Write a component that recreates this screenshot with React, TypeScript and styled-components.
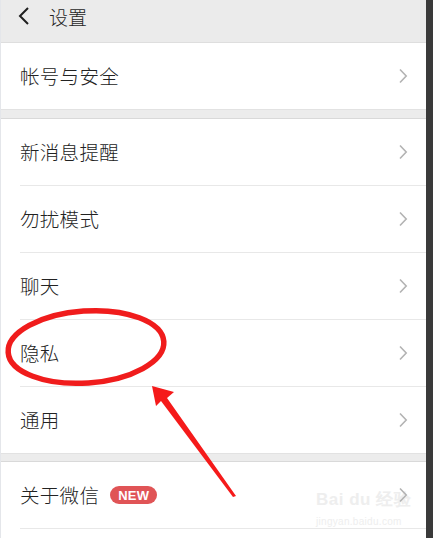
import React from "react";
import styled, { createGlobalStyle } from "styled-components";

const Global = createGlobalStyle`
  html, body { margin: 0; padding: 0; background: #ffffff; }
  body { font-family: "Noto Sans CJK SC", "Noto Sans", sans-serif; }
`;

const Frame = styled.div`
  position: relative;
  width: 433px;
  height: 538px;
  overflow: hidden;
  display: flex;
  background: #ffffff;
`;

const Main = styled.div`
  flex: 1;
  display: flex;
  flex-direction: column;
  border-left: 1px solid #e4e6ea;
`;

const Edge = styled.div`
  width: 7px;
  background: #3a3a3a;
`;

const Header = styled.div`
  height: 43px;
  flex-shrink: 0;
  box-sizing: border-box;
  background: #ebebeb;
  border-bottom: 1px solid #dedede;
  display: flex;
  align-items: flex-start;
  padding: 7px 0 0 17px;
  gap: 19px;
`;

const Title = styled.span`
  font-size: 19px;
  font-weight: 300;
  color: #1f1f1f;
  line-height: 19px;
`;

const Group = styled.div`
  display: flex;
  flex-direction: column;
  background: #ffffff;
`;

const Gap = styled.div<{ $h: number }>`
  height: ${(p) => p.$h}px;
  flex-shrink: 0;
  box-sizing: border-box;
  background: #ececec;
  border-top: 1px solid #e2e2e2;
  border-bottom: 1px solid #d9d9d9;
`;

const Row = styled.div`
  height: 66px;
  flex-shrink: 0;
  display: flex;
  align-items: center;
  padding: 0 18px 0 19px;
`;

const Divider = styled.div`
  height: 1px;
  margin-left: 19px;
  background: #e8e8e8;
`;

const Label = styled.span`
  font-size: 19.5px;
  font-weight: 300;
  color: #222222;
  letter-spacing: 0.3px;
  line-height: 1;
`;

const Badge = styled.span`
  margin-left: 11px;
  height: 18px;
  padding: 0 8px;
  border-radius: 9px;
  background: #e05456;
  color: #ffffff;
  font-family: "Liberation Sans", Arial, sans-serif;
  font-weight: 700;
  font-size: 13px;
  display: inline-flex;
  align-items: center;
  letter-spacing: 0.2px;
`;

const Spacer = styled.div`
  flex: 1;
`;

const ChevronSvg = styled.svg`
  position: relative;
  z-index: 1;
`;

const Overlay = styled.svg`
  position: absolute;
  left: 0;
  top: 0;
  z-index: 2;
  pointer-events: none;
`;

const Watermark = styled.div`
  position: absolute;
  left: 316px;
  top: 491px;
  display: flex;
  flex-direction: column;
  align-items: flex-start;
  color: #eeeeee;
  font-family: "Liberation Sans", Arial, sans-serif;
  pointer-events: none;
`;

const WmTop = styled.span`
  font-size: 17px;
  font-weight: 700;
  letter-spacing: 0.5px;
  line-height: 1;
`;

const WmBottom = styled.span`
  font-size: 10px;
  margin-top: 8px;
  letter-spacing: 0.3px;
`;

const Chevron = () => (
  <ChevronSvg width="10" height="16" viewBox="0 0 10 16">
    <path d="M2 1.5 L8.2 8 L2 14.5" fill="none" stroke="#b3b3b3" strokeWidth="1.6" />
  </ChevronSvg>
);

const Back = () => (
  <svg width="12" height="18" viewBox="0 0 12 18">
    <path d="M10 1 L2 9 L10 17" fill="none" stroke="#1f1f1f" strokeWidth="2" />
  </svg>
);

const items = ["新消息提醒", "勿扰模式", "聊天", "隐私", "通用"];

export default function App() {
  return (
    <>
      <Global />
      <Frame>
        <Main>
          <Header>
            <Back />
            <Title>设置</Title>
          </Header>
          <Group>
            <Row>
              <Label>帐号与安全</Label>
              <Spacer />
              <Chevron />
            </Row>
          </Group>
          <Gap $h={10} />
          <Group>
            {items.map((t, i) => (
              <React.Fragment key={t}>
                {i > 0 && <Divider />}
                <Row>
                  <Label>{t}</Label>
                  <Spacer />
                  <Chevron />
                </Row>
              </React.Fragment>
            ))}
          </Group>
          <Gap $h={9} />
          <Group>
            <Row>
              <Label>关于微信</Label>
              <Badge>NEW</Badge>
              <Spacer />
              <Chevron />
            </Row>
            <Divider />
          </Group>
        </Main>
        <Edge />
        <Watermark>
          <WmTop>Bai du 经验</WmTop>
          <WmBottom>jingyan.baidu.com</WmBottom>
        </Watermark>
        <Overlay width="433" height="538" viewBox="0 0 433 538">
          <ellipse
            cx="86"
            cy="347"
            rx="78"
            ry="36"
            transform="rotate(-4 86 347)"
            fill="none"
            stroke="#f01c1c"
            strokeWidth="5.5"
          />
          <polygon points="152,386 174,392 167,398 236,496 233,497 161,401 156,406" fill="#f51a1a" />
        </Overlay>
      </Frame>
    </>
  );
}
